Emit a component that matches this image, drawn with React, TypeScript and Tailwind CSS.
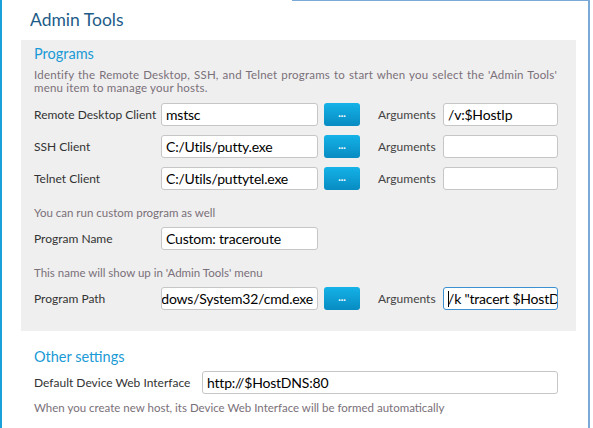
import React from "react";

const font = { fontFamily: 'Lato, "Noto Sans", sans-serif' };

function Field({
  value,
  width,
  alignEnd,
  focused,
}: {
  value?: string;
  width: string;
  alignEnd?: boolean;
  focused?: boolean;
}) {
  return (
    <div
      className={`${width} relative flex h-[23px] shrink-0 items-center overflow-hidden whitespace-nowrap rounded-[3px] border bg-white px-[4px] text-[14px] tracking-[-0.2px] text-black ${
        focused ? "border-[#3c8fd0]" : "border-[#c6c6c6]"
      } ${alignEnd ? "justify-end" : ""}`}
    >
      {focused && <span className="absolute left-[4px] top-[3px] h-[16px] w-px bg-black" />}
      <span className="shrink-0">{value}</span>
    </div>
  );
}

function Browse() {
  return (
    <div className="flex h-[23px] w-[36px] items-center justify-center rounded-[3px] bg-gradient-to-b from-[#14b2e8] to-[#088cc2] pt-[2px] text-[9px] font-bold leading-none text-white">
      ···
    </div>
  );
}

function ProgramRow({
  label,
  value,
  args,
  alignEnd,
  focused,
}: {
  label: string;
  value: string;
  args?: string;
  alignEnd?: boolean;
  focused?: boolean;
}) {
  return (
    <div className="flex items-center">
      <div className="w-[127px] shrink-0 whitespace-nowrap text-[12px] text-[#333]">{label}</div>
      <Field value={value} width="w-[157px]" alignEnd={alignEnd} />
      <div className="ml-[6px]">
        <Browse />
      </div>
      <div className="ml-[18px] w-[65px] shrink-0 whitespace-nowrap text-[12px] text-[#444]">
        Arguments
      </div>
      <Field value={args} width="w-[115px]" focused={focused} />
    </div>
  );
}

export default function App() {
  return (
    <div
      className="relative h-[428px] w-[593px] overflow-hidden border-l-2 border-[#1ba1d9] bg-white"
      style={font}
    >
      <div className="absolute right-[3px] top-0 h-full w-[2px] bg-[#7ba9d8]" />
      <div className="absolute left-[290px] right-[3px] top-0 h-px bg-[#7ba9d8]" />

      <div className="pl-[19px]">
        <h1 className="h-[40px] pl-[9px] pt-[8px] text-[17.5px] leading-[24px] text-[#1e5c88]">
          Admin Tools
        </h1>

        <section className="h-[291px] w-[555px] bg-[#efefef] pl-[13px] pt-[4px]">
          <h2 className="text-[14.5px] leading-[20px] text-[#1a9ad6]">Programs</h2>
          <p className="mt-[4px] w-[523px] text-justify text-[11.5px] leading-[13px] tracking-[0.2px] text-[#7a7079] [text-align-last:left]">
            Identify the Remote Desktop, SSH, and Telnet programs to start when you select the 'Admin Tools'
            menu item to manage your hosts.
          </p>

          <div className="mt-[9px] flex flex-col gap-[9px]">
            <ProgramRow label="Remote Desktop Client" value="mstsc" args="/v:$HostIp" />
            <ProgramRow label="SSH Client" value="C:/Utils/putty.exe" />
            <ProgramRow label="Telnet Client" value="C:/Utils/puttytel.exe" />
          </div>

          <p className="mt-[15px] text-[11.5px] leading-[16px] text-[#7a7079]">
            You can run custom program as well
          </p>
          <div className="mt-[6px] flex items-center">
            <div className="w-[127px] shrink-0 whitespace-nowrap text-[12px] text-[#333]">Program Name</div>
            <Field value="Custom: traceroute" width="w-[157px]" />
          </div>

          <p className="mt-[15px] text-[11.5px] leading-[16px] text-[#7a7079]">
            This name will show up in 'Admin Tools' menu
          </p>
          <div className="mt-[6px]">
            <ProgramRow
              label="Program Path"
              value="C:/Windows/System32/cmd.exe"
              alignEnd
              args={'/k "tracert $HostDNS"'}
              focused
            />
          </div>
        </section>

        <section className="pl-[13px] pt-[16px]">
          <h2 className="text-[14.5px] leading-[20px] text-[#1a9ad6]">Other settings</h2>
          <div className="mt-[4px] flex items-center">
            <div className="w-[168px] shrink-0 whitespace-nowrap text-[12px] text-[#333]">
              Default Device Web Interface
            </div>
            <Field value="http://$HostDNS:80" width="w-[356px]" />
          </div>
          <p className="mt-[6px] text-[11.5px] leading-[16px] text-[#7a7079]">
            When you create new host, its Device Web Interface will be formed automatically
          </p>
        </section>
      </div>
    </div>
  );
}
